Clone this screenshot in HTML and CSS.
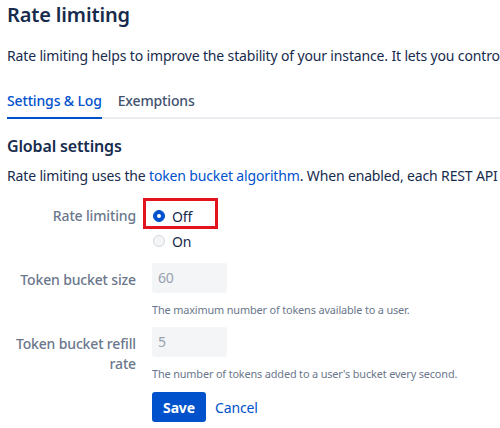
FILE: index.html
```html
<!DOCTYPE html>
<html>
<head>
<meta charset="utf-8">
<link rel="stylesheet" href="styles.css">
</head>
<body>
<div class="page">
  <h1 class="title">Rate limiting</h1>
  <p class="intro">Rate limiting helps to improve the stability of your instance. It lets you control how many REST API requests users can make.</p>
  <div class="tabs">
    <span class="tab active">Settings &amp; Log</span>
    <span class="tab">Exemptions</span>
  </div>
  <h2 class="section">Global settings</h2>
  <p class="intro">Rate limiting uses the <a class="link" href="#">token bucket algorithm</a>. When enabled, each REST API request consumes a token.</p>

  <div class="form">
    <div class="row">
      <div class="label">Rate limiting</div>
      <div class="field radios">
        <label class="radio"><span class="dot checked"></span><span class="rtext">Off</span></label>
        <label class="radio"><span class="dot"></span><span class="rtext">On</span></label>
        <span class="highlight"></span>
      </div>
    </div>
    <div class="row">
      <div class="label label-input">Token bucket size</div>
      <div class="field">
        <div class="input">60</div>
        <div class="help">The maximum number of tokens available to a user.</div>
      </div>
    </div>
    <div class="row">
      <div class="label label-input">Token bucket refill rate</div>
      <div class="field">
        <div class="input">5</div>
        <div class="help">The number of tokens added to a user's bucket every second.</div>
      </div>
    </div>
    <div class="row">
      <div class="label"></div>
      <div class="field buttons">
        <button class="save">Save</button>
        <a class="link cancel" href="#">Cancel</a>
      </div>
    </div>
  </div>
</div>
</body>
</html>
```
FILE: styles.css
```css
html, body {
  margin: 0;
  padding: 0;
  background: #ffffff;
  overflow: hidden;
}
body {
  font-family: "Noto Sans", "Open Sans", sans-serif;
  color: #172b4d;
  width: 500px;
  height: 428px;
  letter-spacing: -0.15px;
}
.page {
  padding: 0 0 0 7px;
}
.title {
  margin: 0;
  padding-top: 3px;
  font-size: 20px;
  font-weight: 600;
  line-height: 24px;
  color: #172b4d;
}
.intro {
  margin: 19px 0 0 0;
  font-size: 14px;
  line-height: 20px;
  white-space: nowrap;
}
.tabs {
  margin-top: 21px;
  display: flex;
  gap: 16px;
  border-bottom: 2px solid #ebecf0;
  height: 30px;
  box-sizing: content-box;
}
.tab {
  font-size: 14px;
  font-weight: 500;
  line-height: 20px;
  color: #42526e;
  padding-top: 4px;
  margin-bottom: -2px;
}
.tab.active {
  color: #0052cc;
  border-bottom: 2px solid #0052cc;
}
.section {
  margin: 17px 0 0 0;
  font-size: 16px;
  font-weight: 600;
  line-height: 20px;
  color: #172b4d;
}
.section + .intro {
  margin-top: 10px;
}
.link {
  color: #0052cc;
  text-decoration: none;
}
.form {
  margin-top: 14px;
  display: flex;
  flex-direction: column;
}
.row {
  display: grid;
  grid-template-columns: 129px 1fr;
  column-gap: 16px;
}
.label {
  text-align: right;
  font-size: 14px;
  font-weight: 500;
  line-height: 20px;
  color: #6b778c;
  padding-top: 6px;
}
.label-input {
  padding-top: 7px;
}
.field {
  position: relative;
}
.radios {
  display: flex;
  flex-direction: column;
  padding-top: 6px;
  gap: 5px;
  padding-bottom: 12px;
}
.radio {
  display: flex;
  align-items: center;
  height: 20px;
  font-size: 14px;
  color: #172b4d;
}
.dot {
  width: 12px;
  height: 12px;
  border-radius: 50%;
  box-sizing: border-box;
  border: 1px solid #d3d7de;
  background: #f4f5f7;
  margin: 0 7px 0 1px;
  position: relative;
}
.dot.checked {
  background: #0052cc;
  border-color: #0052cc;
}
.dot.checked::after {
  content: "";
  position: absolute;
  left: 3px;
  top: 3px;
  width: 4px;
  height: 4px;
  border-radius: 50%;
  background: #ffffff;
}
.highlight {
  position: absolute;
  left: -9px;
  top: -2px;
  width: 75px;
  height: 31px;
  border: 3px solid #e4141e;
  box-sizing: border-box;
}
.input {
  width: 75px;
  height: 30px;
  background: #f4f5f7;
  border-radius: 3px;
  box-sizing: border-box;
  padding: 0 6px;
  font-size: 14px;
  line-height: 30px;
  color: #97a0af;
}
.help {
  font-size: 10.9px;
  line-height: 14px;
  color: #6b778c;
  margin-top: 10px;
  padding-bottom: 10px;
  white-space: nowrap;
}
.buttons {
  display: flex;
  align-items: center;
  gap: 9px;
  padding-top: 1px;
}
.save {
  font-family: inherit;
  letter-spacing: inherit;
  background: #0052cc;
  color: #ffffff;
  border: none;
  border-radius: 3px;
  width: 54px;
  height: 30px;
  font-size: 14px;
  font-weight: 700;
  padding: 0;
}
.cancel {
  font-size: 14px;
}
```
